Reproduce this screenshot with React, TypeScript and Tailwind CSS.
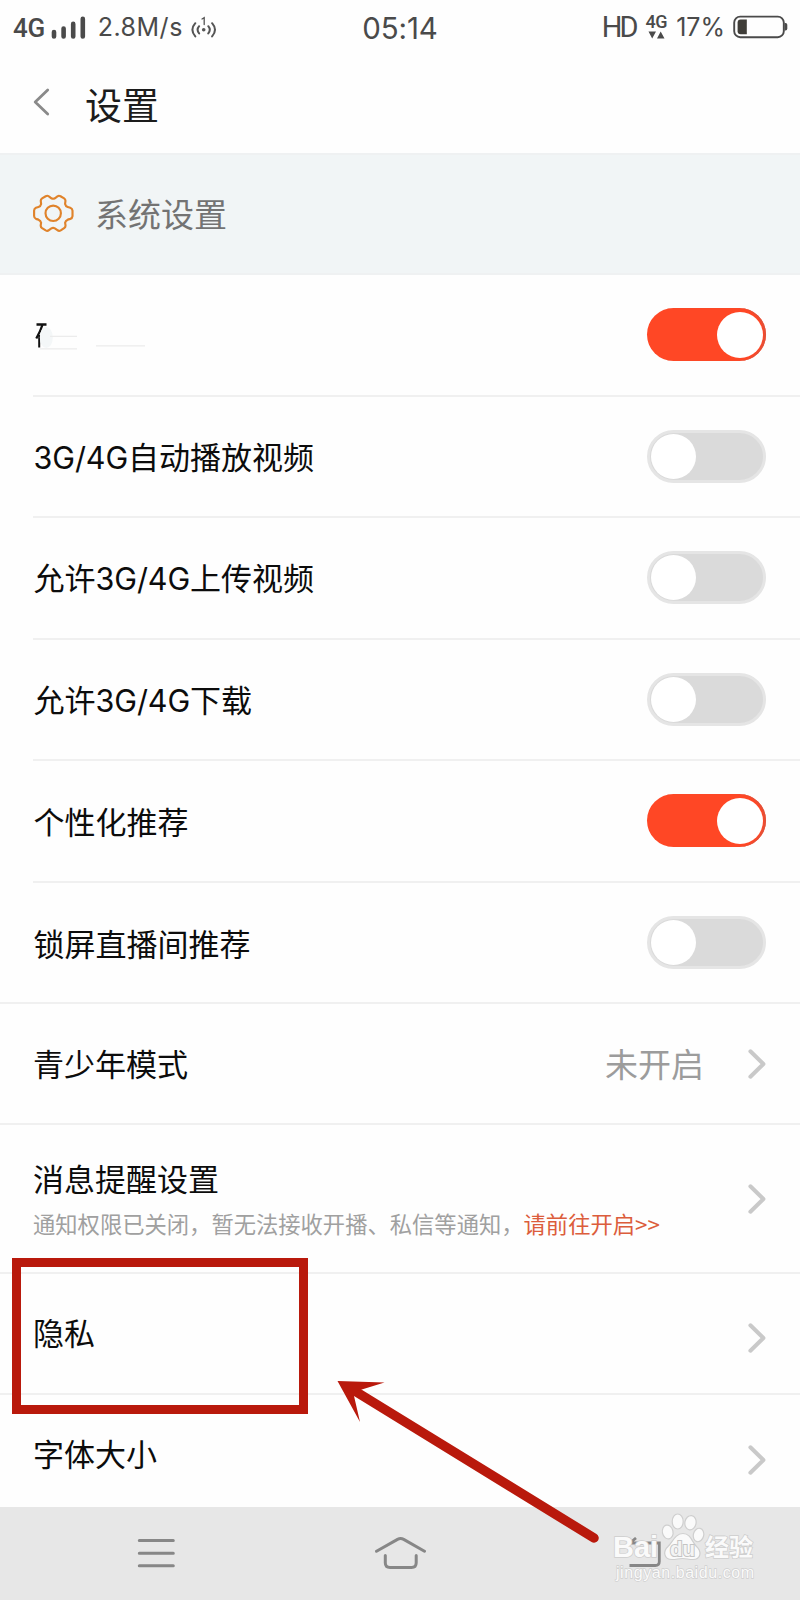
import type { ReactNode } from "react";

function Toggle({ on = false }: { on?: boolean }) {
  return on ? (
    <div className="flex h-[53px] w-[119px] items-center justify-end rounded-full bg-[#ff4725] pr-[3px] shadow-[inset_-2px_0_1px_#e2513a]">
      <div className="size-[46px] rounded-full bg-white" />
    </div>
  ) : (
    <div className="flex h-[53px] w-[119px] items-center rounded-full border-[3px] border-[#e5e5e5] bg-[#dadada] pl-[1px]">
      <div className="size-[45px] rounded-full bg-white" />
    </div>
  );
}

function Chevron() {
  return (
    <svg className="h-[30px] w-[18px]" viewBox="0 0 18 30" fill="none" stroke="#c9c9c9" strokeWidth="4" strokeLinecap="round" strokeLinejoin="round">
      <path d="M2.4 2.3 15.4 15 2.4 27.7" />
    </svg>
  );
}

function Latin({ children }: { children: ReactNode }) {
  return <span className="font-['Inter'] text-[30.5px] font-normal tracking-[-0.1px]">{children}</span>;
}

function SwitchRow({ label, on, last }: { label: ReactNode; on?: boolean; last?: boolean }) {
  return (
    <div className={last ? "border-b-2 border-[#f0f0f0]" : "pl-[33px]"}>
      <div
        className={
          last
            ? "flex h-[119.5px] items-center justify-between pr-[34px] pl-[33px]"
            : "flex h-[121.5px] items-center justify-between border-b-2 border-[#f0f0f0] pr-[34px]"
        }
      >
        <div className="flex h-[45px] items-center pl-[0.5px] text-[31px] leading-[45px] whitespace-nowrap">
          <span>{label}</span>
        </div>
        <Toggle on={on} />
      </div>
    </div>
  );
}

function SignalBars() {
  return (
    <svg className="ml-[6px] h-[24px] w-[35px]" viewBox="0 0 35 24" stroke="#4a4a4a" strokeWidth="4.6" strokeLinecap="round">
      <path d="M3 16v4.400M12.600 12.500v7.900M22.200 7.900v12.500M31.800 2.700v17.700" />
    </svg>
  );
}

function Hotspot() {
  return (
    <svg className="ml-[8px] h-[24px] w-[26px]" viewBox="0 0 26 24" fill="none" stroke="#555" strokeWidth="2" strokeLinecap="round">
      <path d="M4.300 7.200q-5.800 6.600 0 13.200M8.100 10.200q-3 3.600 0 7.200M21.100 7.200q5.800 6.600 0 13.200M17.300 10.200q3 3.600 0 7.200" />
      <path d="M11 3l2.200-1.400v7" strokeWidth="1.3" />
      <circle cx="12.700" cy="13.800" r="1.800" fill="#555" stroke="none" />
    </svg>
  );
}

function StatusBar() {
  return (
    <div className="grid h-[56px] grid-cols-[1fr_auto_1fr] items-center font-['Inter'] text-[#4a4a4a]">
      <div className="flex items-center pl-[13px]">
        <span className="pt-[1px] font-['Roboto'] text-[26px] font-medium tracking-[-0.4px]">4G</span>
        <SignalBars />
        <span className="ml-[12px] text-[25px] tracking-[0.5px]">2.8M/s</span>
        <Hotspot />
      </div>
      <span className="text-[29.5px] tracking-[-0.1px]">05:14</span>
      <div className="flex items-center justify-end pr-[12px]">
        <span className="font-['Roboto'] text-[29px] tracking-[-3px]">HD</span>
        <div className="mr-[1px] ml-[10px] flex -translate-y-[2px] flex-col items-center">
          <span className="font-['Roboto'] text-[18px] leading-[17px] font-medium tracking-[-0.4px]">4G</span>
          <svg className="h-[9px] w-[17px]" viewBox="0 0 17 9" fill="#4a4a4a">
            <path d="M0.500 1.500h7.500L4.200 8.500zM9 8.500h7.500L12.700 1.500z" />
          </svg>
        </div>
        <span className="ml-[8px] text-[25px]">17%</span>
        <svg className="ml-[8px] h-[24px] w-[55px] -translate-y-[1px]" viewBox="0 0 55 24">
          <rect x="1.200" y="1.600" width="49.600" height="20.600" rx="6" fill="none" stroke="#4a4a4a" strokeWidth="1.900" />
          <path d="M51.500 8h1q1.800 0 1.800 1.800v4q0 1.800-1.800 1.800h-1z" fill="#4a4a4a" />
          <path d="M13.800 4.600v14.700H7.600q-3 0-3-3V7.600q0-3 3-3z" fill="#3f3d38" />
        </svg>
      </div>
    </div>
  );
}

function Header() {
  return (
    <div className="flex h-[97px] items-center pl-[33px]">
      <svg className="-mt-[5px] h-[28px] w-[17px]" viewBox="0 0 17 28" fill="none" stroke="#8a8a8a" strokeWidth="2.8" strokeLinecap="round" strokeLinejoin="round">
        <path d="M14.700 2 2.200 14l12.500 12" />
      </svg>
      <span className="ml-[35px] text-[37px] text-[#1c1c1c]">设置</span>
    </div>
  );
}

function Gear() {
  return (
    <svg className="-mt-[2px] h-[39px] w-[41px]" viewBox="0 0 42 40" fill="none" stroke="#e0832b" strokeWidth="2.2" strokeLinejoin="round">
      <path d="M13 2.3Q14.800 1.200 16.300 2.500L18.800 4.400Q20.600 5.300 22.400 4.400L25 2.500Q26.400 1.200 28.200 2.300L31.900 4.500Q33.600 5.600 33.200 7.600L32.900 10.200Q33.400 12.600 35.600 13.300L38.200 14.100Q40.300 14.800 40.500 17V22.600Q40.300 24.800 38.200 25.500L35.600 26.300Q33.400 27.200 32.900 29.400L33.300 32Q33.500 33.900 31.900 35L28.400 37.300Q26.600 38.300 25 37L22.400 35.200Q20.600 34.200 18.800 35.200L16.300 37Q14.800 38.300 13 37.300L9.300 35Q7.700 33.900 7.900 32L8.300 29.400Q7.800 27.200 5.600 26.300L3 25.500Q1.200 24.800 1.100 22.600V17Q1.200 14.800 3 14.100L5.600 13.300Q7.800 12.600 8.300 10.200L8 7.600Q7.600 5.600 9.300 4.500Z" />
      <circle cx="20.700" cy="19.800" r="7.900" />
    </svg>
  );
}

function ObscuredLabel() {
  return (
    <svg className="h-[40px] w-[112px] translate-y-[1px]" viewBox="0 0 112 40" fill="none">
      <path d="M2.500 8.500h10M8.600 8.500Q6.500 15 2.300 22.500" stroke="#111" strokeWidth="2.300" />
      <path d="M5.200 19v12.500" stroke="#111" strokeWidth="2" />
      <ellipse cx="12.300" cy="21.500" rx="6.500" ry="10.500" fill="#f4f7f8" />
      <path d="M16 20.400h27M6 32.900h37M62 29.900h49" stroke="#ececec" strokeWidth="1.400" />
    </svg>
  );
}

function NavBar() {
  return (
    <div className="flex h-[93px] items-start bg-[#e7e7e7] pt-[30px]">
      <svg className="ml-[137px] h-[32px] w-[39px]" viewBox="0 0 39 32" stroke="#878787" strokeWidth="3" strokeLinecap="round">
        <path d="M2.300 3.600h34M2.300 16.300h34M2.300 28.800h34" />
      </svg>
      <svg className="ml-[198px] h-[34px] w-[54px]" viewBox="0 0 54 34" fill="none" stroke="#878787" strokeWidth="3" strokeLinecap="round">
        <path d="M2.500 14.200 23.500 2.400q3.100-1.600 6.200 0l20.800 11.800M11.300 18.500v7.300q0 4.700 4.700 4.700h21.500q4.700 0 4.700-4.700v-7.300" />
      </svg>
      <svg className="ml-[199px] h-[34px] w-[40px]" viewBox="0 0 40 34" fill="none" stroke="#878787" strokeWidth="2.8">
        <path d="M3 6h29.300v18.500q0 4-4 4H2.500M9 1 3 6" />
      </svg>
    </div>
  );
}

function Watermark() {
  return (
    <svg className="absolute top-[1510px] left-[608px] h-[75px] w-[156px]" viewBox="0 0 156 75">
      <g fill="#fafafa" stroke="#cfcfcf" strokeWidth="1.2">
        <ellipse cx="59.700" cy="22" rx="5.300" ry="7" transform="rotate(-12 59.700 22)" />
        <ellipse cx="69.700" cy="11.500" rx="5.500" ry="7.500" />
        <ellipse cx="82.500" cy="12.700" rx="5.600" ry="7.200" transform="rotate(10 82.500 12.700)" />
        <ellipse cx="90.500" cy="25" rx="5.200" ry="6.800" transform="rotate(14 90.500 25)" />
        <path d="M75 23.500c8 0 9 9 13.500 13 5.500 5 4.500 13-3.500 13-4.500 0-6.500-1-10.500-1s-6 1-10.500 1c-8 0-9.500-8-4-13C64.500 32.500 67 23.500 75 23.500z" />
      </g>
      <g fill="#fafafa" stroke="#cecece" strokeWidth="1.600" paintOrder="stroke" className="font-['Liberation_Sans','Noto_Sans_CJK_SC',sans-serif] font-bold">
        <text x="5" y="46.500" fontSize="29" textLength="45" lengthAdjust="spacingAndGlyphs">Bai</text>
        <text x="97" y="46" fontSize="24" textLength="48" lengthAdjust="spacingAndGlyphs">经验</text>
      </g>
      <text x="62" y="46" fontSize="21" textLength="25" lengthAdjust="spacingAndGlyphs" fill="#f4f4f4" stroke="#c4c4c4" strokeWidth="2" paintOrder="stroke" className="font-['Liberation_Sans',sans-serif] font-bold">du</text>
      <text x="8" y="67.500" fontSize="16" textLength="138" fill="#fafafa" stroke="#cfcfcf" strokeWidth="1.300" paintOrder="stroke" className="font-['Liberation_Sans',sans-serif] font-normal">jingyan.baidu.com</text>
    </svg>
  );
}

export default function App() {
  return (
    <div className="relative flex h-[1600px] w-[800px] flex-col overflow-hidden bg-[#fefefe] font-['Noto_Sans_CJK_SC',sans-serif] font-normal text-[#0c0c0c]">
      <StatusBar />
      <Header />
      <div className="flex h-[122px] items-center border-y-2 border-[#eff1f2] bg-[#f1f5f6] pl-[33px]">
        <Gear />
        <span className="-mt-[1px] ml-[21px] text-[33px] text-[#737373]">系统设置</span>
      </div>

      <SwitchRow on label={<ObscuredLabel />} />
      <SwitchRow label={<><Latin>3G/4G</Latin>自动播放视频</>} />
      <SwitchRow label={<>允许<Latin>3G/4G</Latin>上传视频</>} />
      <SwitchRow label={<>允许<Latin>3G/4G</Latin>下载</>} />
      <SwitchRow on label="个性化推荐" />
      <SwitchRow last label="锁屏直播间推荐" />

      <div className="flex h-[121px] items-center border-b-2 border-[#f0f0f0] pr-[34px] pl-[33px]">
        <span className="flex-1 text-[31px]">青少年模式</span>
        <span className="mr-[44px] text-[33px] text-[#9c9c9c]">未开启</span>
        <Chevron />
      </div>
      <div className="flex h-[149px] items-center justify-between border-b-2 border-[#f0f0f0] pr-[34px] pl-[33px]">
        <div>
          <div className="text-[31px] leading-[48px]">消息提醒设置</div>
          <div className="text-[22.3px] leading-[42px] whitespace-nowrap text-[#a0a0a0]">
            通知权限已关闭，暂无法接收开播、私信等通知，<span className="text-[#dc5d3c]">请前往开启&gt;&gt;</span>
          </div>
        </div>
        <Chevron />
      </div>
      <div className="flex h-[121px] items-center justify-between border-b-2 border-[#f0f0f0] pr-[34px] pl-[33px]">
        <span className="-mt-[3px] text-[31px]">隐私</span>
        <div className="pt-[9px]"><Chevron /></div>
      </div>
      <div className="flex h-[112px] items-center justify-between pr-[34px] pl-[33px]">
        <span className="pt-[5px] text-[31px]">字体大小</span>
        <div className="pt-[18px]"><Chevron /></div>
      </div>
      <NavBar />

      <div className="absolute top-[1258px] left-[12px] h-[156px] w-[296px] border-[9px] border-[#b9190c]" />
      <svg className="absolute top-[1370px] left-[330px] h-[180px] w-[280px]" viewBox="0 0 280 180">
        <path d="M24 20.500 264 168" stroke="#b9190c" strokeWidth="9.500" strokeLinecap="round" />
        <path d="M7.500 11 54.500 12.500 27 21 24 26 30 52z" fill="#b9190c" />
      </svg>
      <Watermark />
    </div>
  );
}
